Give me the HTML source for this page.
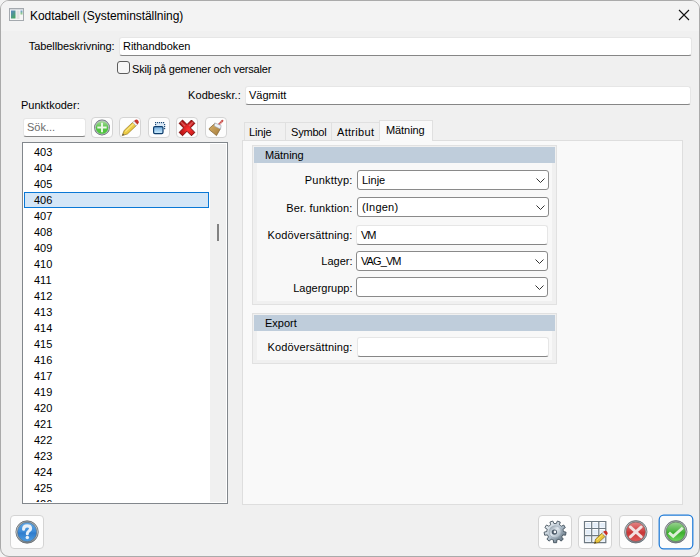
<!DOCTYPE html>
<html><head><meta charset="utf-8">
<style>
*{box-sizing:border-box;margin:0;padding:0}
html,body{width:700px;height:557px;overflow:hidden;background:#f2f2f2}
body{font-family:"Liberation Sans",sans-serif;font-size:11px;color:#000;position:relative}
.a{position:absolute}
.t{position:absolute;white-space:pre;line-height:12px}
.r{text-align:right}
#win{left:0;top:0;width:700px;height:557px;border:1px solid #aaaaaa;border-radius:9px;background:#f0f0f0;overflow:hidden}
#title{left:0;top:0;width:698px;height:30px;background:#f3f3f3}
.fld{position:absolute;background:#fff;border-radius:3px;border:1px solid #e6e6e6;border-bottom:1px solid #868686}
.btn{position:absolute;background:#fdfdfd;border:1px solid #d4d4d4;border-radius:4px}
.tab{position:absolute;border:1px solid #e0e0e0;border-bottom:none;background:#f0f0f0}
.cmb{position:absolute;background:#fff;border:1px solid #8a8a8a;border-radius:3px;height:20px;width:192px;left:357px}
.chev{position:absolute;right:3.5px;top:7px}
.grp{position:absolute;border:1px solid #e1e1e1;background:#f0f0f0}
.gh{position:absolute;background:#bfcddb}
.gb{position:absolute;background:#f8f8f8}
</style></head><body>
<div id="win" class="a">
 <div id="title" class="a"></div>
</div>

<!-- title icon -->
<svg class="a" style="left:9px;top:8px" width="15" height="13" viewBox="0 0 15 13">
 <defs><linearGradient id="ig" x1="0" y1="0" x2="0.6" y2="1"><stop offset="0" stop-color="#5a86c4"/><stop offset="1" stop-color="#4aa566"/></linearGradient>
 <linearGradient id="ig2" x1="0" y1="0" x2="0" y2="1"><stop offset="0" stop-color="#6a9ad0"/><stop offset="0.6" stop-color="#8cc890"/><stop offset="1" stop-color="#f4f4f4"/></linearGradient></defs>
 <rect x="0.5" y="0.5" width="14" height="12" fill="#f6f6f6" stroke="#a4a9ae"/>
 <rect x="1" y="1" width="13" height="1" fill="#d6dade"/>
 <rect x="2" y="2.5" width="4.5" height="8" fill="url(#ig)"/>
 <rect x="7.5" y="2.5" width="3" height="8.5" fill="#e2e2e2"/>
 <rect x="11.5" y="2.5" width="2" height="5" fill="url(#ig2)"/>
</svg>
<div class="t" style="left:30px;top:10px;font-size:12px;letter-spacing:-0.05px">Kodtabell (Systeminställning)</div>
<svg class="a" style="left:678px;top:9px" width="12" height="12" viewBox="0 0 12 12"><path d="M1 1L11 11M11 1L1 11" stroke="#111" stroke-width="1.1"/></svg>

<!-- Tabellbeskrivning -->
<div class="t r" style="left:0;width:114.5px;top:40px;letter-spacing:-0.1px">Tabellbeskrivning:</div>
<div class="fld" style="left:119px;top:37px;width:573px;height:19px"></div>
<div class="t" style="left:123px;top:40px;letter-spacing:-0.05px">Rithandboken</div>

<!-- checkbox -->
<div class="a" style="left:117px;top:61px;width:13px;height:13px;border:1px solid #5c5c5c;border-radius:3px;background:#f6f6f6"></div>
<div class="t" style="left:132px;top:63px;letter-spacing:-0.2px">Skilj på gemener och versaler</div>

<!-- Kodbeskr -->
<div class="t" style="left:188px;top:89px;letter-spacing:0.09px">Kodbeskr.:</div>
<div class="fld" style="left:245px;top:86px;width:446px;height:19px"></div>
<div class="t" style="left:249px;top:89px">Vägmitt</div>

<div class="t" style="left:21px;top:99px">Punktkoder:</div>

<!-- search -->
<div class="fld" style="left:23px;top:118px;width:63px;height:19px"></div>
<div class="t" style="left:27px;top:121px;color:#6b6b6b">Sök...</div>

<!-- toolbar buttons -->
<div class="btn" style="left:91px;top:117px;width:22px;height:21px"></div>
<div class="btn" style="left:119px;top:117px;width:22px;height:21px"></div>
<div class="btn" style="left:148px;top:117px;width:22px;height:21px"></div>
<div class="btn" style="left:176px;top:117px;width:22px;height:21px"></div>
<div class="btn" style="left:205px;top:117px;width:22px;height:21px"></div>

<svg class="a" style="left:91px;top:117px" width="22" height="21" viewBox="0 0 22 21">
 <defs>
  <linearGradient id="gg" x1="0" y1="0" x2="0" y2="1"><stop offset="0" stop-color="#a6dc98"/><stop offset="0.5" stop-color="#56c248"/><stop offset="1" stop-color="#4cc83a"/></linearGradient>
  <linearGradient id="ring" x1="0" y1="0" x2="0" y2="1"><stop offset="0" stop-color="#b4bcc2"/><stop offset="1" stop-color="#5d656b"/></linearGradient>
 </defs>
 <circle cx="11" cy="10.5" r="7.9" fill="#6a7075"/><circle cx="11" cy="10.5" r="7.2" fill="#b9c2c6"/><circle cx="11" cy="10.5" r="6.3" fill="url(#gg)"/>
 <path d="M11 5.8V15.2M6.3 10.5H15.7" stroke="#eef8ea" stroke-width="1.9"/>
</svg>
<svg class="a" style="left:119px;top:117px" width="22" height="21" viewBox="0 0 22 21">
 <g transform="translate(3.2 18.6) rotate(-43.5)">
  <path d="M0 0L5 -2.4H17V2.4H5Z" fill="#eccb45" stroke="#9b7b25" stroke-width="0.7"/>
  <path d="M5 -0.6H17" stroke="#fbe98a" stroke-width="1"/>
  <path d="M0 0L2 -1V1Z" fill="#555"/>
  <rect x="16.6" y="-2.5" width="2.2" height="5" fill="#f0f0f0" stroke="#a0a0a0" stroke-width="0.5"/>
  <path d="M18.8 -2.4H19.6A2.4 2.4 0 0 1 19.6 2.4H18.8Z" fill="#c8352a"/>
 </g>
</svg>
<svg class="a" style="left:148px;top:117px" width="22" height="21" viewBox="0 0 22 21">
 <defs><linearGradient id="wb" x1="0" y1="0" x2="0" y2="1"><stop offset="0" stop-color="#6fa9dc"/><stop offset="1" stop-color="#d2f0ff"/></linearGradient></defs>
 <rect x="8" y="6" width="8" height="6" fill="#dcebf8"/>
 <g fill="#1d4a78"><rect x="7" y="5" width="1.2" height="1.2"/><rect x="9" y="5" width="1.2" height="1.2"/><rect x="11" y="5" width="1.2" height="1.2"/><rect x="13" y="5" width="1.2" height="1.2"/><rect x="15" y="5" width="1.2" height="1.2"/><rect x="16" y="7" width="1.2" height="1.2"/><rect x="16" y="9" width="1.2" height="1.2"/><rect x="16" y="11" width="1.2" height="1.2"/><rect x="7" y="7" width="1.2" height="1.2"/></g>
 <rect x="5.6" y="9.6" width="9.4" height="7" rx="1.3" fill="url(#wb)" stroke="#0e3d6c" stroke-width="1.2"/>
</svg>
<svg class="a" style="left:176px;top:117px" width="22" height="21" viewBox="0 0 22 21">
 <defs><radialGradient id="xr" cx="0.6" cy="0.6" r="0.6"><stop offset="0" stop-color="#ff3434"/><stop offset="1" stop-color="#b01010"/></radialGradient></defs>
 <path d="M11.00 14.29 L15.49 18.78 L18.88 15.39 L14.39 10.90 L18.88 6.41 L15.49 3.02 L11.00 7.51 L6.51 3.02 L3.12 6.41 L7.61 10.90 L3.12 15.39 L6.51 18.78Z" fill="url(#xr)" stroke="#6e0000" stroke-width="0.9" stroke-linejoin="miter"/>
 <path d="M5 5L9 9M17 5L13 9" stroke="#e88080" stroke-width="1.6" opacity="0.6"/>
</svg>
<svg class="a" style="left:205px;top:117px" width="22" height="21" viewBox="0 0 22 21">
 <defs><linearGradient id="br" x1="0" y1="0" x2="1" y2="1"><stop offset="0" stop-color="#d9b26a"/><stop offset="1" stop-color="#a57b3a"/></linearGradient></defs>
 <path d="M13.7 7.8L17.4 3.8" stroke="#c84844" stroke-width="2" stroke-linecap="round"/>
 <path d="M13.7 7.8L17.4 3.8" stroke="#f0d0d0" stroke-width="2" stroke-dasharray="0.6 1.2"/>
 <path d="M4.2 11.5L9.8 6.5L15.3 9.4L15 12.4L11.5 18.6L4.4 12.8Z" fill="url(#br)" stroke="#7a5a28" stroke-width="0.7"/>
 <path d="M9.8 5.9L16.2 8.6L15.5 12.2L9.2 9Z" fill="#eef2f6" stroke="#8a96a4" stroke-width="0.5"/>
</svg>

<!-- list -->
<div class="a" style="left:22px;top:142px;width:206px;height:362px;border:1px solid #82878c;background:#fff;overflow:hidden">
 <div class="a" style="left:187px;top:1px;width:16px;height:358px;background:#f0f0f0"></div>
 <div class="a" style="left:194px;top:81px;width:2px;height:17px;background:#828282"></div>
 <div class="a" style="left:1px;top:49px;width:185px;height:16px;background:#d4e6f7;border:1px solid #0a78d6"></div>
 <div class="a" style="left:0;top:0;width:186px;height:359px;overflow:hidden">
 <div class="t" style="left:11px;top:3px">403</div><div class="t" style="left:11px;top:19px">404</div><div class="t" style="left:11px;top:35px">405</div><div class="t" style="left:11px;top:51px">406</div><div class="t" style="left:11px;top:67px">407</div><div class="t" style="left:11px;top:83px">408</div><div class="t" style="left:11px;top:99px">409</div><div class="t" style="left:11px;top:115px">410</div><div class="t" style="left:11px;top:131px">411</div><div class="t" style="left:11px;top:147px">412</div><div class="t" style="left:11px;top:163px">413</div><div class="t" style="left:11px;top:179px">414</div><div class="t" style="left:11px;top:195px">415</div><div class="t" style="left:11px;top:211px">416</div><div class="t" style="left:11px;top:227px">417</div><div class="t" style="left:11px;top:243px">419</div><div class="t" style="left:11px;top:259px">420</div><div class="t" style="left:11px;top:275px">421</div><div class="t" style="left:11px;top:291px">422</div><div class="t" style="left:11px;top:307px">423</div><div class="t" style="left:11px;top:323px">424</div><div class="t" style="left:11px;top:339px">425</div><div class="t" style="left:11px;top:355px">426</div></div>
</div>

<!-- tabs -->
<div class="a" style="left:242px;top:140px;width:441px;height:365px;border:1px solid #dedede;background:#f9f9f9"></div>
<div class="tab" style="left:244px;top:122px;width:42px;height:18px"></div>
<div class="tab" style="left:285px;top:122px;width:47px;height:18px"></div>
<div class="tab" style="left:331px;top:122px;width:49px;height:18px"></div>
<div class="tab" style="left:379px;top:120px;width:54px;height:21px;background:#f9f9f9"></div>
<div class="t" style="left:249px;top:126px;letter-spacing:-0.15px">Linje</div>
<div class="t" style="left:291px;top:126px;letter-spacing:-0.2px">Symbol</div>
<div class="t" style="left:337px;top:126px;letter-spacing:0.3px">Attribut</div>
<div class="t" style="left:386px;top:124px;letter-spacing:-0.08px">Mätning</div>

<!-- group Mätning -->
<div class="grp" style="left:252px;top:145px;width:305px;height:160px"></div>
<div class="gh" style="left:254px;top:147px;width:301px;height:16px"></div>
<div class="gb" style="left:257px;top:163px;width:295px;height:138px"></div>
<div class="t" style="left:265px;top:149px;letter-spacing:-0.08px">Mätning</div>

<div class="t r" style="left:250px;width:102.5px;top:174px;letter-spacing:0.2px">Punkttyp:</div>
<div class="t r" style="left:250px;width:102.5px;top:201.5px;letter-spacing:0.15px">Ber. funktion:</div>
<div class="t r" style="left:250px;width:102.5px;top:229px;letter-spacing:0.15px">Kodöversättning:</div>
<div class="t r" style="left:250px;width:102.5px;top:255px">Lager:</div>
<div class="t r" style="left:250px;width:102.5px;top:282px">Lagergrupp:</div>

<div class="cmb" style="top:170px"><div class="t" style="left:4px;top:3px">Linje</div><svg class="chev" width="9" height="5" viewBox="0 0 9 5"><path d="M0.5 0.5L4.5 4.5L8.5 0.5" fill="none" stroke="#333" stroke-width="1"/></svg></div>
<div class="cmb" style="top:197px"><div class="t" style="left:4px;top:3px;letter-spacing:0.2px">(Ingen)</div><svg class="chev" width="9" height="5" viewBox="0 0 9 5"><path d="M0.5 0.5L4.5 4.5L8.5 0.5" fill="none" stroke="#333" stroke-width="1"/></svg></div>
<div class="fld" style="left:356px;top:225px;width:192px;height:20px"></div>
<div class="t" style="left:361px;top:229px;letter-spacing:-1px">VM</div>
<div class="cmb" style="top:251px;left:356px"><div class="t" style="left:4px;top:3px;letter-spacing:-0.9px">VAG_VM</div><svg class="chev" width="9" height="5" viewBox="0 0 9 5"><path d="M0.5 0.5L4.5 4.5L8.5 0.5" fill="none" stroke="#333" stroke-width="1"/></svg></div>
<div class="cmb" style="top:277px;left:356px"><svg class="chev" width="9" height="5" viewBox="0 0 9 5"><path d="M0.5 0.5L4.5 4.5L8.5 0.5" fill="none" stroke="#333" stroke-width="1"/></svg></div>

<!-- group Export -->
<div class="grp" style="left:252px;top:313px;width:305px;height:51px"></div>
<div class="gh" style="left:254px;top:315px;width:301px;height:16px"></div>
<div class="gb" style="left:257px;top:331px;width:295px;height:29px"></div>
<div class="t" style="left:265px;top:317px">Export</div>
<div class="t r" style="left:250px;width:102.5px;top:341px;letter-spacing:0.15px">Kodöversättning:</div>
<div class="fld" style="left:357px;top:337px;width:192px;height:20px"></div>

<!-- bottom buttons -->
<div class="btn" style="left:10px;top:515px;width:34px;height:34px"></div>
<div class="btn" style="left:538px;top:515px;width:34px;height:34px"></div>
<div class="btn" style="left:578px;top:515px;width:34px;height:34px"></div>
<div class="btn" style="left:619px;top:515px;width:34px;height:34px"></div>
<svg class="a" style="left:658px;top:514px" width="36" height="36" viewBox="0 0 36 36"><rect x="1.2" y="1.2" width="33.6" height="33.6" rx="4.5" fill="#fcfcfc" stroke="#1f7bd8" stroke-width="1.25"/></svg>


<svg class="a" style="left:10px;top:515px" width="34" height="34" viewBox="0 0 34 34">
 <defs>
  <linearGradient id="hb" x1="0" y1="0" x2="0" y2="1"><stop offset="0" stop-color="#62a8e6"/><stop offset="0.5" stop-color="#3a8ad8"/><stop offset="0.55" stop-color="#2f7ccc"/><stop offset="1" stop-color="#4f9fe4"/></linearGradient>
  <linearGradient id="rg2" x1="0" y1="0" x2="0" y2="1"><stop offset="0" stop-color="#9aa2a6"/><stop offset="0.5" stop-color="#dde3e6"/><stop offset="1" stop-color="#7a8287"/></linearGradient>
 </defs>
 <circle cx="17.1" cy="17" r="11.2" fill="url(#rg2)" stroke="#62686d" stroke-width="0.8"/>
 <circle cx="17.1" cy="17" r="9.7" fill="url(#hb)" stroke="#5c6870" stroke-width="0.6"/>
 <path d="M13.6 14.2C13.6 11.6 15.3 10.9 17.1 10.9C19.1 10.9 20.6 12 20.6 13.7C20.6 15.8 17.3 16.1 17.3 18.7" fill="none" stroke="#e9f1f8" stroke-width="3.1" stroke-linecap="round"/>
 <circle cx="17.3" cy="22.6" r="1.75" fill="#e9f1f8"/>
</svg>
<svg class="a" style="left:538px;top:515px" width="34" height="34" viewBox="0 0 34 34">
 <defs><linearGradient id="gr" x1="0.1" y1="0.1" x2="0.9" y2="0.9"><stop offset="0" stop-color="#f2f6f9"/><stop offset="0.5" stop-color="#b4c2ce"/><stop offset="1" stop-color="#5f707d"/></linearGradient>
 <linearGradient id="gf" x1="0" y1="0" x2="1" y2="1"><stop offset="0" stop-color="#7f8f9c"/><stop offset="0.45" stop-color="#dfe7ee"/><stop offset="1" stop-color="#94a4b0"/></linearGradient></defs>
 <path d="M17.10 8.50 L18.26 8.58 L19.39 6.04 L22.26 7.09 L21.50 9.76 L22.44 10.44 L23.27 11.25 L25.77 10.03 L27.30 12.68 L24.99 14.24 L25.27 15.36 L25.39 16.51 L28.09 17.18 L27.56 20.20 L24.80 19.91 L24.29 20.95 L23.64 21.91 L25.27 24.16 L22.93 26.13 L21.00 24.13 L19.94 24.60 L18.83 24.92 L18.63 27.69 L15.57 27.69 L15.37 24.92 L14.26 24.60 L13.20 24.13 L11.27 26.13 L8.93 24.16 L10.56 21.91 L9.91 20.95 L9.40 19.91 L6.64 20.20 L6.11 17.18 L8.81 16.51 L8.93 15.36 L9.21 14.24 L6.90 12.68 L8.43 10.03 L10.93 11.25 L11.76 10.44 L12.70 9.76 L11.94 7.09 L14.81 6.04 L15.94 8.58Z" fill="url(#gr)" stroke="#44525e" stroke-width="0.9" stroke-linejoin="round"/>
 <circle cx="17.1" cy="16.8" r="6" fill="url(#gf)" stroke="#9aa8b4" stroke-width="0.6"/>
 <circle cx="16.4" cy="17.1" r="2.7" fill="#4a5866"/>
 <circle cx="16.9" cy="16.9" r="1.3" fill="#f4f6f8"/>
</svg>
<svg class="a" style="left:578px;top:515px" width="34" height="34" viewBox="0 0 34 34">
 <g fill="#e3edf8">
  <rect x="8" y="8" width="4.5" height="4.5"/><rect x="15.2" y="8" width="4.5" height="4.5"/><rect x="22.3" y="8" width="4.5" height="4.5"/>
  <rect x="8" y="15" width="4.5" height="4.5"/><rect x="15.2" y="15" width="4.5" height="4.5"/><rect x="22.3" y="15" width="4.5" height="4.5"/>
  <rect x="8" y="22" width="4.5" height="4.5"/><rect x="15.2" y="22" width="4.5" height="4.5"/><rect x="22.3" y="22" width="4.5" height="4.5"/>
 </g>
 <path d="M6.5 6V28M13.7 6V28M20.8 6V28M27.8 6V28M6 6.5H28.3M6 13.5H28.3M6 20.6H28.3M6 27.6H28.3" stroke="#6d7982" stroke-width="1.2"/>
 <g transform="translate(16.4 28.4) rotate(-43.3)">
  <path d="M0 0L4 -2.3H12.5V2.3H4Z" fill="#e8c43a" stroke="#8a6a1a" stroke-width="0.7"/>
  <path d="M4 -0.7H12.5" stroke="#f8e47a" stroke-width="0.9"/>
  <path d="M0 0L1.8 -0.9V0.9Z" fill="#333"/>
  <rect x="12.5" y="-2.4" width="1.8" height="4.8" fill="#eeeeee" stroke="#9a9a9a" stroke-width="0.5"/>
  <path d="M14.3 -2.4H14.9A2.4 2.4 0 0 1 14.9 2.4H14.3Z" fill="#cc2e24"/>
 </g>
</svg>
<svg class="a" style="left:619px;top:515px" width="34" height="34" viewBox="0 0 34 34">
 <defs>
  <linearGradient id="rb" x1="0" y1="0" x2="0" y2="1"><stop offset="0" stop-color="#e38686"/><stop offset="0.45" stop-color="#d04444"/><stop offset="0.55" stop-color="#c83636"/><stop offset="1" stop-color="#e45c5c"/></linearGradient>
  <linearGradient id="rg3" x1="0" y1="0" x2="0" y2="1"><stop offset="0" stop-color="#9aa4a8"/><stop offset="0.5" stop-color="#d4e0e3"/><stop offset="1" stop-color="#74808a"/></linearGradient>
 </defs>
 <circle cx="16.8" cy="16.8" r="11.2" fill="url(#rg3)" stroke="#62686d" stroke-width="0.8"/>
 <circle cx="16.8" cy="16.8" r="9.7" fill="url(#rb)" stroke="#6a5a5a" stroke-width="0.6"/>
 <path d="M11.3 11.9L22.3 21.9M22.3 11.9L11.3 21.9" stroke="#f2e2e2" stroke-width="2.8" stroke-linecap="round"/>
</svg>
<svg class="a" style="left:659px;top:515px" width="34" height="34" viewBox="0 0 34 34">
 <defs>
  <linearGradient id="okb" x1="0" y1="0" x2="0" y2="1"><stop offset="0" stop-color="#9ad292"/><stop offset="0.45" stop-color="#52b846"/><stop offset="0.55" stop-color="#3cae2e"/><stop offset="1" stop-color="#72dc60"/></linearGradient>
 </defs>
 <circle cx="16.8" cy="16.8" r="11.2" fill="url(#rg2)" stroke="#62686d" stroke-width="0.8"/>
 <circle cx="16.8" cy="16.8" r="9.7" fill="url(#okb)" stroke="#5a6a5a" stroke-width="0.6"/>
 <path d="M10 17.6L14.2 21.4L23.8 12.7" fill="none" stroke="#dff0d8" stroke-width="2.8" stroke-linejoin="miter"/>
</svg>
</body></html>
